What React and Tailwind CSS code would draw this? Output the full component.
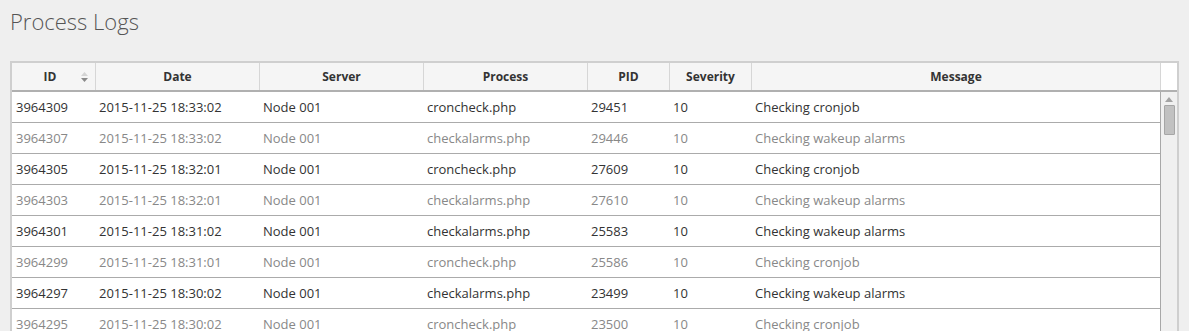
const columns = [
  { key: "id", label: "ID", width: "w-[84px]", sort: true },
  { key: "date", label: "Date", width: "w-[164px]" },
  { key: "server", label: "Server", width: "w-[164px]" },
  { key: "process", label: "Process", width: "w-[164px]" },
  { key: "pid", label: "PID", width: "w-[82px]" },
  { key: "severity", label: "Severity", width: "w-[82px]" },
  { key: "message", label: "Message", width: "flex-1" },
];

const logs = [
  ["3964309", "2015-11-25 18:33:02", "Node 001", "croncheck.php", "29451", "10", "Checking cronjob"],
  ["3964307", "2015-11-25 18:33:02", "Node 001", "checkalarms.php", "29446", "10", "Checking wakeup alarms"],
  ["3964305", "2015-11-25 18:32:01", "Node 001", "croncheck.php", "27609", "10", "Checking cronjob"],
  ["3964303", "2015-11-25 18:32:01", "Node 001", "checkalarms.php", "27610", "10", "Checking wakeup alarms"],
  ["3964301", "2015-11-25 18:31:02", "Node 001", "checkalarms.php", "25583", "10", "Checking wakeup alarms"],
  ["3964299", "2015-11-25 18:31:01", "Node 001", "croncheck.php", "25586", "10", "Checking cronjob"],
  ["3964297", "2015-11-25 18:30:02", "Node 001", "checkalarms.php", "23499", "10", "Checking wakeup alarms"],
  ["3964295", "2015-11-25 18:30:02", "Node 001", "croncheck.php", "23500", "10", "Checking cronjob"],
];

function SortIcon() {
  return (
    <svg width="9" height="12" viewBox="0 0 9 12" className="ml-auto mr-[6px]">
      <path d="M4.5 1 L8 5 H1 Z" fill="#d4d4d4" />
      <path d="M4.5 11 L8 7 H1 Z" fill="#8a8a8a" />
    </svg>
  );
}

export default function App() {
  return (
    <div
      className="min-h-[331px] bg-[#efefef] px-[10px] pt-[4px] overflow-hidden"
      style={{ fontFamily: '"Open Sans", "Liberation Sans", sans-serif' }}
    >
      <h1 className="text-[22px] font-light leading-[34px] text-[#555]">
        Process Logs
      </h1>

      <div className="mt-[23px] border-2 border-[#cfcfcf] bg-white">
        {/* header */}
        <div className="flex h-[29px] border-b-2 border-[#b0b0b0]">
          <div className="flex flex-1 bg-[#f5f5f5] border-r border-[#d6d6d6]">
            {columns.map((col, i) => (
              <div
                key={col.key}
                className={`${col.width} flex items-center justify-center text-[12px] font-bold text-[#333] ${
                  i < columns.length - 1 ? "border-r border-[#d6d6d6]" : ""
                }`}
              >
                {col.sort ? (
                  <>
                    <span className="ml-auto pl-[8px]">{col.label}</span>
                    <SortIcon />
                  </>
                ) : (
                  col.label
                )}
              </div>
            ))}
          </div>
          <div className="w-[16px] bg-white" />
        </div>

        {/* body */}
        <div className="flex">
          <div className="flex-1 border-r border-[#a8a8a8]">
            {logs.map((row, r) => (
              <div
                key={row[0]}
                className={`flex h-[31px] items-center pt-[1px] border-b border-[#ababab] text-[13px] ${
                  r % 2 === 0 ? "text-[#333]" : "text-[#888]"
                }`}
              >
                {row.map((cell, c) => (
                  <div
                    key={c}
                    className={`${columns[c].width} ${c === 0 ? "pl-[4px]" : "pl-[3px]"} whitespace-nowrap`}
                  >
                    {cell}
                  </div>
                ))}
              </div>
            ))}
          </div>
          <div className="w-[16px] bg-[#f0f0f0] flex flex-col items-center pt-[5px]">
            <svg width="8" height="5" viewBox="0 0 8 5">
              <path d="M4 0 L8 5 H0 Z" fill="#a3a3a3" />
            </svg>
            <div className="mt-[3px] ml-[1px] h-[30px] w-[11px] rounded-[1px] border border-[#a6a6a6] bg-[#c1c1c1]" />
          </div>
        </div>
      </div>
    </div>
  );
}
